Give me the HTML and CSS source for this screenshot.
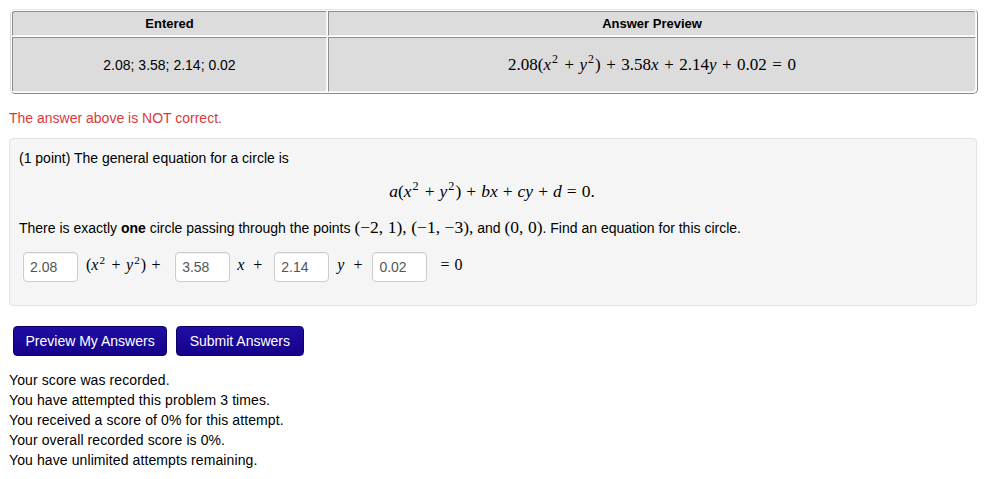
FILE: index.html
```html
<!DOCTYPE html>
<html>
<head>
<meta charset="utf-8">
<link rel="stylesheet" href="styles.css">
</head>
<body>
<div class="page">
  <table class="results">
    <thead>
      <tr><th class="c1">Entered</th><th class="c2">Answer Preview</th></tr>
    </thead>
    <tbody>
      <tr>
        <td class="c1">2.08; 3.58; 2.14; 0.02</td>
        <td class="c2"><span class="math big">2.08(<i>x</i><sup>2</sup><span class="op">+</span><i>y</i><sup>2</sup>)<span class="op">+</span>3.58<i>x</i><span class="op">+</span>2.14<i>y</i><span class="op">+</span>0.02<span class="op">=</span>0</span></td>
      </tr>
    </tbody>
  </table>

  <div class="error">The answer above is NOT correct.</div>

  <div class="well">
    <p class="line">(1 point) The general equation for a circle is</p>
    <div class="display"><span class="math disp"><i>a</i>(<i>x</i><sup>2</sup><span class="op">+</span><i>y</i><sup>2</sup>)<span class="op">+</span><i>bx</i><span class="op">+</span><i>cy</i><span class="op">+</span><i>d</i><span class="op">=</span>0.</span></div>
    <p class="line line2">There is exactly <b>one</b> circle passing through the points <span class="math inl">(−2,<span class="th"></span>1),<span class="th"></span>(−1,<span class="th"></span>−3),</span> and <span class="math inl">(0,<span class="th"></span>0)</span>. Find an equation for this circle.</p>
    <div class="answer-row">
      <input class="ans" type="text" value="2.08">
      <span class="math term t1">(<i>x</i><sup>2</sup><span class="op">+</span><i>y</i><sup>2</sup>)<span class="op">+</span></span>
      <input class="ans" type="text" value="3.58">
      <span class="math term t2"><i>x</i><span class="op sm">+</span></span>
      <input class="ans" type="text" value="2.14">
      <span class="math term t3"><i>y</i><span class="op sm">+</span></span>
      <input class="ans" type="text" value="0.02">
      <span class="math term t4"><span class="op lead">=</span>0</span>
    </div>
  </div>

  <div class="buttons">
    <button class="btn" type="button">Preview My Answers</button>
    <button class="btn" type="button">Submit Answers</button>
  </div>

  <div class="score">
    <div>Your score was recorded.</div>
    <div>You have attempted this problem 3 times.</div>
    <div>You received a score of 0% for this attempt.</div>
    <div>Your overall recorded score is 0%.</div>
    <div>You have unlimited attempts remaining.</div>
  </div>
</div>
</body>
</html>
```

FILE: styles.css
```css
* { box-sizing: border-box; }

html, body {
  margin: 0;
  padding: 0;
  background: #fff;
}

body {
  font-family: "Liberation Sans", Arial, Helvetica, sans-serif;
  font-size: 14px;
  color: #000;
}

.page {
  padding: 9px 17px 0 9px;
  width: 994px;
}

/* results table */
.results {
  margin-left: 1px;
  width: 968px;
  height: 85px;
  table-layout: fixed;
  border-collapse: separate;
  border-spacing: 1px;
  border-top: 1px solid #e4e4e4;
  border-left: 1px solid #d8d8d8;
  border-right: 1px solid #8a8a8a;
  border-bottom: 1px solid #8a8a8a;
  border-radius: 5px;
}

.results th,
.results td {
  background: #dcdcdc;
  border-top: 1px solid #8c8c8c;
  border-left: 1px solid #8c8c8c;
  border-right: 1px solid #f4f4f4;
  border-bottom: 1px solid #f4f4f4;
  text-align: center;
  padding: 0;
}

.results th {
  font-size: 13px;
  font-weight: bold;
  height: 25px;
  line-height: 22px;
}

.results td {
  height: 55px;
  font-size: 14px;
  line-height: 20px;
}

.results .c1 { width: 315px; }

.results thead th.c1 { border-top-left-radius: 3px; }
.results thead th.c2 { border-top-right-radius: 3px; }
.results tbody td.c1 { border-bottom-left-radius: 3px; }
.results tbody td.c2 { border-bottom-right-radius: 3px; }

/* math */
.math {
  font-family: "Liberation Serif", "Times New Roman", serif;
  font-size: 16px;
  line-height: 1;
  white-space: nowrap;
}

.math.big { font-size: 17px; }
.math.disp { font-size: 17.5px; }
.math.inl { font-size: 17.5px; }

.math i { font-style: italic; }

.math sup {
  font-size: 70%;
  line-height: 0;
  vertical-align: 0;
  position: relative;
  top: -0.55em;
  margin-left: 1px;
  margin-right: 1px;
}

.op {
  margin: 0 5.5px;
}

.disp .op { margin: 0 5px; }

.th {
  display: inline-block;
  width: 4.5px;
}

/* error line */
.error {
  margin-top: 14px;
  height: 20px;
  line-height: 20px;
  color: #da3a3a;
}

/* problem well */
.well {
  margin-top: 10px;
  background: #f5f5f5;
  border: 1px solid #e3e3e3;
  border-radius: 4px;
  padding: 9px 9px 23px 9px;
  display: flex;
  flex-direction: column;
}

.line {
  margin: 0;
  height: 20px;
  line-height: 20px;
}

.display {
  margin-top: 13px;
  height: 22px;
  line-height: 22px;
  text-align: center;
  padding-right: 2px;
}

.line2 { margin-top: 15px; }

.answer-row {
  margin-top: 14px;
  display: flex;
  align-items: center;
  height: 30px;
  padding-left: 4px;
}

.ans {
  width: 55px;
  height: 30px;
  border: 1px solid #cccccc;
  border-radius: 4px;
  background: #fff;
  padding: 0 6px;
  font-family: "Liberation Sans", Arial, sans-serif;
  font-size: 14px;
  color: #555;
  box-shadow: inset 0 1px 1px rgba(0,0,0,0.06);
  outline: none;
}

.term {
  line-height: 30px;
  padding-bottom: 4px;
}

.t1 { margin: 0 9px 0 8px; }
.t2 { margin: 0 12px 0 7px; }
.t3 { margin: 0 10px 0 8px; }
.t4 { margin: 0 0 0 13px; }

.op.sm { margin: 0 0 0 9px; }
.op.lead { margin: 0 5px 0 0; }

/* buttons */
.buttons {
  margin-top: 20px;
  padding-left: 4px;
  display: flex;
  gap: 9px;
}

.btn {
  height: 30px;
  padding: 0 11.5px;
  border: 1px solid #0c0066;
  border-radius: 4px;
  background: linear-gradient(#1f0ea3, #15018a);
  color: #fff;
  font-family: "Liberation Sans", Arial, sans-serif;
  font-size: 14px;
  line-height: 28px;
  cursor: pointer;
}

.btn + .btn { padding: 0 12.5px; }

/* score */
.score {
  margin-top: 14px;
  line-height: 20px;
  letter-spacing: 0.1px;
}
```
